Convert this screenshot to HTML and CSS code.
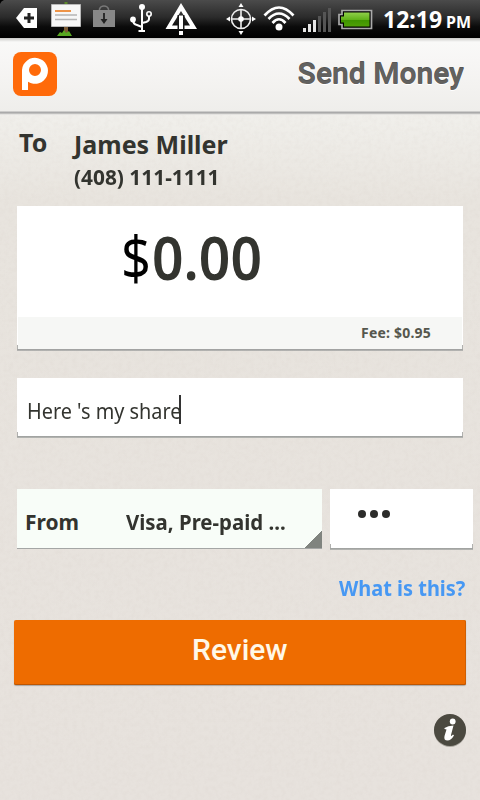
FILE: index.html
```html
<!DOCTYPE html>
<html lang="en">
<head>
<meta charset="utf-8">
<title>Send Money</title>
<link rel="stylesheet" href="styles.css">
</head>
<body>
<div class="screen">
  <svg class="paper" width="480" height="800" aria-hidden="true">
    <filter id="grain"><feTurbulence type="fractalNoise" baseFrequency="0.22" numOctaves="3" seed="4"/><feColorMatrix values="0 0 0 0 .55  0 0 0 0 .48  0 0 0 0 .44  .5 0 0 0 -.19"/></filter>
    <rect width="480" height="800" filter="url(#grain)" opacity=".35"/>
  </svg>
  <div class="status">
    <svg class="status-icons" width="376" height="38" viewBox="0 0 376 38">
      <defs>
        <linearGradient id="green" x2="0" y2="1"><stop offset="0" stop-color="#8fd04a"/><stop offset=".5" stop-color="#62b31a"/><stop offset=".55" stop-color="#3f9400"/><stop offset="1" stop-color="#4fa006"/></linearGradient>
      </defs>
      <path d="M0 0h4Q1 1 0 4z" fill="#000"/>
      <path d="M16 18L24 8h13v20H24z" fill="#fff"/>
      <path d="M29 13v10M24 18h10" stroke="#222" stroke-width="3"/>
      <path d="M66 2v3" stroke="#5c8a2b" stroke-width="3"/>
      <path d="M66 26v9" stroke="#7a5a34" stroke-width="4"/>
      <path d="M57 36l3-4 2 1 2-3 2 3 3-2 3 5z" fill="#58a821"/>
      <path d="M51.500 4.500h29v22h-29z" fill="#f7f7f7" stroke="#b9b9b9"/>
      <path d="M55 11h16" stroke="#ee9448" stroke-width="2"/>
      <path d="M55 15h22M55 19.500h22" stroke="#b5b5b5" stroke-width="1.700"/>
      <path d="M99.500 10V9q1-3 4.500-3t4.500 3v1" fill="none" stroke="#777" stroke-width="1.500"/>
      <path d="M93 10h22v17H93z" fill="#888"/>
      <path d="M104 13v7" stroke="#222" stroke-width="1.800"/><path d="M100.500 19h7l-3.500 5z" fill="#222"/>
      <g fill="none" stroke="#fff" stroke-width="2">
        <path d="M142 7v24M133 20q0 4 4 5l5 2M149 16v3q0 2-3 3l-4 1M138.500 31h6.500"/>
        <circle cx="149" cy="14" r="2.200" stroke-width="1.600"/>
      </g>
      <circle cx="142" cy="7" r="3" fill="#fff"/><circle cx="133" cy="19.500" r="2.900" fill="#fff"/>
      <path d="M181 3l16 26H165.500zM181 11l-9 14.500h18z" fill="#fff" fill-rule="evenodd"/>
      <path d="M177.500 15h7v15h-7z" fill="#191919"/>
      <path d="M179 15.500h4V29h-4zM179 31h4v4h-4z" fill="#fff"/>
      <g fill="none" stroke="#eee" stroke-width="1.600"><circle cx="241" cy="19" r="9.500"/><path d="M241 9v20M231 19h20"/></g>
      <circle cx="241" cy="19" r="2.800" fill="#fff"/>
      <path d="M241 3l2.500 4h-5zM241 35l2.500-4h-5zM226 19l4-2.500v5zM256 19l-4-2.500v5z" fill="#fff"/>
      <g fill="none" stroke="#fff" stroke-width="2.700"><path d="M264.500 15.500q14.500-16 29 0M268.500 19q10.500-11 21 0M272.500 23q6.500-7.500 13 0"/></g>
      <circle cx="279" cy="27" r="3.500" fill="#fff"/>
      <path d="M303 28h3v4h-3zM308 24h3v8h-3zM313 20h3v12h-3z" fill="#e6e6e6"/>
      <path d="M318 16h3v16h-3zM323 12h3v20h-3zM328 8h3v24h-3z" fill="#555"/>
      <path d="M342 10.500h29.500v18H342v-4h-3v-10h3z" fill="#000" stroke="#aaa" stroke-width="1.700"/>
      <path d="M344 12.500h25.500v14H344v-4h-3v-6h3z" fill="url(#green)"/>
    </svg>
    <div class="clock"><span class="time">12:19</span><span class="pm">PM</span></div>
  </div>
  <header class="header">
    <svg class="logo" width="44" height="44" viewBox="0 0 44 44">
      <rect width="44" height="44" rx="8" fill="#ff6a0a"/>
      <path d="M9 38V18A13 13 0 1 1 15 29.800V38zM22 12a6 6 0 1 0 0 12a6 6 0 1 0 0-12z" fill="#fff" fill-rule="evenodd"/>
    </svg>
    <h1 class="title">Send Money</h1>
  </header>
  <main class="content">
    <section class="recipient">
      <span class="to">To</span>
      <div class="person"><div class="name">James Miller</div><div class="phone">(408) 111-1111</div></div>
    </section>
    <section class="amount field">
      <div class="sum"><span class="dollar">$</span><span class="value">0.00</span></div>
      <div class="fee"><span class="fee-text">Fee: $0.95</span></div>
    </section>
    <div class="note field"><span class="note-text">Here 's my share</span><span class="caret"></span></div>
    <div class="payment">
      <div class="source"><span class="from">From</span><span class="card">Visa, Pre-paid ...</span></div>
      <div class="cvv field"><i class="dot"></i><i class="dot"></i><i class="dot"></i></div>
    </div>
    <div class="help"><span class="help-text">What is this?</span></div>
    <div class="review"><span class="review-text">Review</span></div>
    <div class="info">
      <svg width="34" height="36" viewBox="0 0 34 36">
        <circle cx="17" cy="18" r="16" fill="#aaa69f"/><circle cx="17" cy="17" r="16" fill="#4b4940"/>
        <circle cx="19.700" cy="8.500" r="2.900" fill="#fff"/>
        <path d="M11.500 15Q15 12.500 20.500 12.500L18 22Q17.800 24 20 21.500L21 22.500Q18 27.500 14.500 27.500Q10.500 27.500 11.500 23L13.500 16.500L11.500 16z" fill="#fff"/>
      </svg>
    </div>
  </main>
</div>
</body>
</html>
```
FILE: styles.css
```css
* { box-sizing: border-box; }
body { margin: 0; font-family: "Noto Sans", "Open Sans", sans-serif; color: #33342f; }
.screen { position: relative; width: 480px; height: 800px; overflow: hidden; background: linear-gradient(#f1f0ec 110px, #e8e4de 200px, #e7e2dd); }
.paper { position: absolute; inset: 0; }
.status, .header, .content { position: relative; }
.status { height: 38px; display: flex; background: linear-gradient(#4b4b4b, #2b2b2b 45%, #0b0b0b 70%, #000); color: #fff; }
.status-icons { flex: none; }
.clock { display: flex; align-items: baseline; padding-left: 7px; font-weight: 700; line-height: 38px; white-space: nowrap; }
.time { width: 63px; font-size: 23px; }
.pm { font-size: 16px; }
.header { height: 77px; padding: 14px 16px 0 13px; display: flex; justify-content: space-between; background: linear-gradient(#c9c9c7, #f9f9f8 4px, #f7f6f5 30%, #efeeeb 73px, #aaa 74px, #aaa 75px, #d5d4d1 76px, #f4f3f1 77px); }
.title { margin: 0; font: 600 30px/44px Roboto, sans-serif; color: #62615f; text-shadow: 0 -1px 0 #555, 0 1px 0 #fff; }
.content { padding: 0 14px 0 17px; line-height: 1; }
.recipient { display: flex; height: 91px; padding: 13px 0 0 2px; font-weight: 700; }
.to { width: 55px; font-size: 25px; line-height: 28px; }
.name { font-size: 25px; line-height: 32px; }
.phone { font-size: 21px; line-height: 34px; transform: scaleX(.993); }
.name, .phone, .to { white-space: nowrap; }
.field { background: linear-gradient(#9a9c9b, #b9b9b6) left bottom / 100% 2px no-repeat, linear-gradient(#b0b0ae, #b0b0ae) left bottom / 1px 6px no-repeat, linear-gradient(#b0b0ae, #b0b0ae) right bottom / 1px 6px no-repeat, #fff; }
.amount { width: 446px; height: 145px; padding-bottom: 2px; }
.sum { display: flex; height: 111px; padding: 17px 0 0 104px; font-size: 60px; line-height: 68px; }
.dollar { width: 30.500px; color: #000; transform: scaleX(.87); transform-origin: left center; }
.value { font-weight: 600; transform: scaleX(.92); }
.fee { height: 32px; margin: 0 1px; padding-right: 31px; background: #f6f7f5; text-align: right; font-size: 14px; letter-spacing: .2px; font-weight: 700; line-height: 32px; color: #55574d; }
.note { width: 446px; height: 60px; margin-top: 27px; padding-left: 10px; display: flex; align-items: center; font-size: 22px; }
.note-text, .card, .from, .help-text, .review-text, .fee-text, .value, .title, .name, .phone, .to, .time, .pm { transform-origin: left center; white-space: nowrap; }
.note-text { width: 152px; line-height: 60px; padding-top: 4px; transform: scaleX(.903); }
.caret { width: 2px; height: 29px; background: #333; margin-top: 3px; }
.payment { display: flex; gap: 8px; margin-top: 51px; margin-right: -7px; }
.source { width: 305px; height: 60px; padding: 3px 0 0 8px; display: flex; font-size: 21px; font-weight: 700; line-height: 60px; background: linear-gradient(135deg, transparent 50%, #80847f 50%) right 0 bottom 1px / 19px 17px no-repeat, linear-gradient(#a4a6a5, #a4a6a5) left bottom / 100% 1px no-repeat, #f8fdf8; }
.from { width: 101px; }
.card { transform: scaleX(.972); }
.cvv { width: 143px; height: 61px; display: flex; gap: 4px; padding: 21px 0 0 28px; }
.dot { width: 8px; height: 8px; border-radius: 50%; background: #2c2c2a; }
.help { height: 70px; padding: 22px 0 0 322px; font-size: 21px; font-weight: 700; line-height: 32px; color: #4798f3; }
.help-text { display: block; transform: scaleX(.95); }
.review { width: 452px; height: 65px; margin-left: -3px; padding-left: 178px; border-radius: 2px; background: #ee6c00; color: #fff8e8; font: 500 30px/59px Roboto, sans-serif; box-shadow: inset 0 -1px #bd5602, inset -1px 0 #cf5f03, 0 1px 1px #aaa7a3; }
.info { display: flex; justify-content: flex-end; padding: 28px 0 0; margin-right: -1px; }
```
